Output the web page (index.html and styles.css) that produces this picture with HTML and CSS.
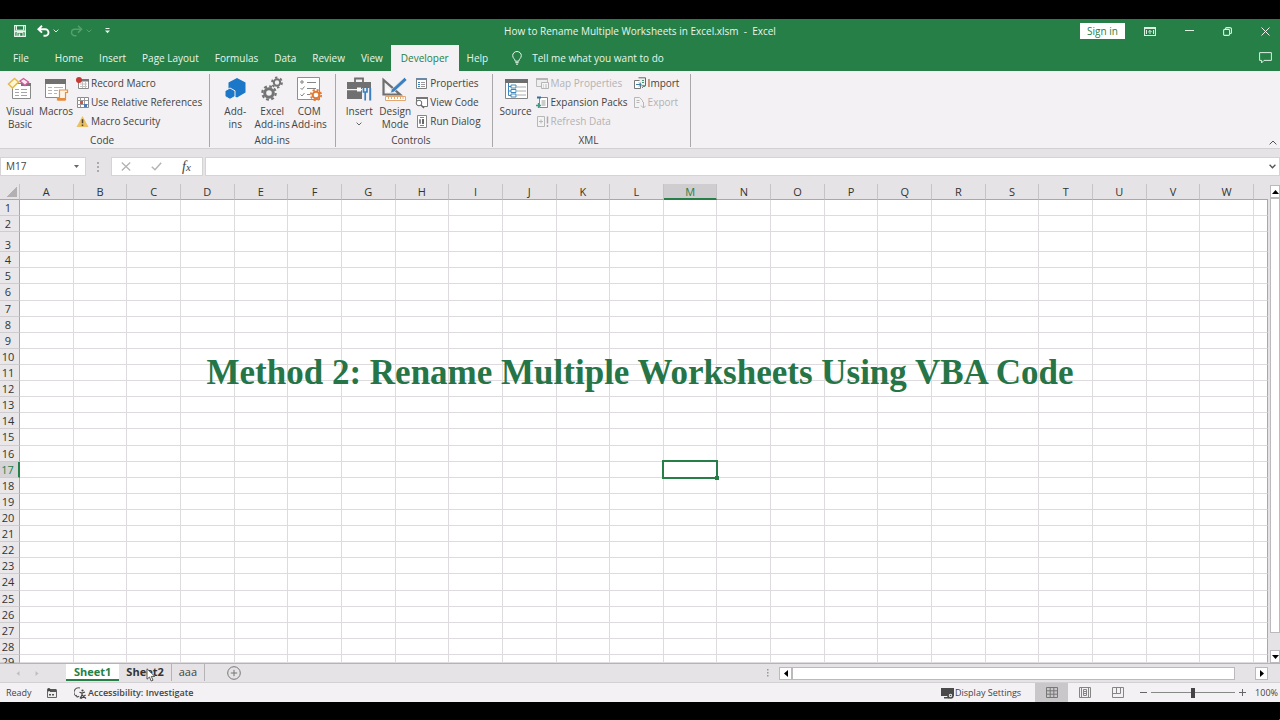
FILE: index.html
```html
<!DOCTYPE html>
<html lang="en">
<head>
  <meta charset="UTF-8" />
  <meta name="viewport" content="width=device-width, initial-scale=1" />
  <title>How to Rename Multiple Worksheets in Excel.xlsm - Excel</title>
  <link rel="stylesheet" href="styles.css">
</head>
<body>

  <!-- Title bar -->
  <header class="titlebar">
    <div class="quick-access">
      <button class="icon-btn" aria-label="Save">
        <svg width="12" height="12" viewBox="0 0 12 12"><path d="M.7.7h10.6v10.6H.7z" fill="none" stroke="#e9f5ec" stroke-width="1.3"/><path d="M2.500 1v4.200h7V1M3 11V7.600h6V11" fill="none" stroke="#e9f5ec"/><path d="M1 5.600h10v1.600H1zM4.600 8.400h1.600V11H4.600z" fill="#e9f5ec"/></svg>
      </button>
      <button class="icon-btn undo" aria-label="Undo">
        <svg width="13" height="12" viewBox="0 0 13 12"><path d="M5 .8 1.400 4.200 5 7.600M1.800 4.200h6.400a3.200 3.200 0 0 1 0 6.600H6.500" fill="none" stroke="#fff" stroke-width="1.900"/></svg>
        <svg width="6" height="4" viewBox="0 0 6 4"><path d="M.6.6 3 3 5.400.6" fill="none" stroke="#d5ebda"/></svg>
      </button>
      <button class="icon-btn redo" aria-label="Redo">
        <svg width="13" height="12" viewBox="0 0 13 12"><path d="M8 .8 11.600 4.200 8 7.600M11.200 4.200H4.800a3.200 3.200 0 0 0 0 6.600h1.700" fill="none" stroke="#56a06d" stroke-width="1.500"/></svg>
        <svg width="6" height="4" viewBox="0 0 6 4"><path d="M.6.6 3 3 5.400.6" fill="none" stroke="#56a06d"/></svg>
      </button>
      <button class="icon-btn" aria-label="Customize Quick Access Toolbar">
        <svg width="5" height="6" viewBox="0 0 5 6"><path d="M.5.5h4" stroke="#e9f5ec"/><path d="M0 2.500h5L2.500 5.200z" fill="#e9f5ec"/></svg>
      </button>
    </div>
    <div class="doc-title">How to Rename Multiple Worksheets in Excel.xlsm&nbsp; -&nbsp; Excel</div>
    <div class="window-controls">
      <button class="sign-in">Sign in</button>
      <button class="icon-btn" aria-label="Ribbon Display Options">
        <svg width="12" height="9" viewBox="0 0 12 9"><path d="M.5.5h11v8H.5zM.5 1.500h11" fill="none" stroke="#dcefe0" stroke-width="1.200"/><path d="M6 7V3.500M4.200 5.200 6 3.400l1.800 1.800M2.500 3v4M9.500 3v4" fill="none" stroke="#dcefe0"/></svg>
      </button>
      <button class="icon-btn" aria-label="Minimize">
        <svg width="9" height="9" viewBox="0 0 9 9"><path d="M0 3.500h9" stroke="#dcefe0"/></svg>
      </button>
      <button class="icon-btn" aria-label="Restore">
        <svg width="9" height="9" viewBox="0 0 9 9"><rect x=".6" y="2.400" width="6" height="6" rx="1.200" fill="none" stroke="#dcefe0" stroke-width="1.100"/><path d="M2.500 2V1.600A1 1 0 0 1 3.500.6h3.400A1.600 1.600 0 0 1 8.500 2.200v3.300a1 1 0 0 1-1 1H7" fill="none" stroke="#dcefe0" stroke-width="1.100"/></svg>
      </button>
      <button class="icon-btn" aria-label="Close">
        <svg width="9" height="9" viewBox="0 0 9 9"><path d="m.5.5 8 8m0-8-8 8" stroke="#e9f5ec"/></svg>
      </button>
    </div>
  </header>

  <!-- Ribbon tabs -->
  <nav class="tabs">
    <button class="tab tab-file">File</button>
    <button class="tab">Home</button>
    <button class="tab">Insert</button>
    <button class="tab">Page Layout</button>
    <button class="tab">Formulas</button>
    <button class="tab">Data</button>
    <button class="tab">Review</button>
    <button class="tab">View</button>
    <button class="tab active">Developer</button>
    <button class="tab">Help</button>
    <button class="tab tell-me">
      <svg width="10" height="14" viewBox="0 0 10 14"><path d="M3.200 10.200C3.200 8 .7 7.400.7 4.600A4.300 4.100 0 0 1 9.300 4.600C9.300 7.400 6.800 8 6.800 10.200zM3.300 11.700h3.400M4 13.200h2" fill="none" stroke="#e9f5ec"/></svg>
      Tell me what you want to do
    </button>
    <button class="icon-btn comments" aria-label="Comments">
      <svg width="13" height="12" viewBox="0 0 13 12"><path d="M.6.6h11.800v7.800H5L2.600 10.900V8.400h-2z" fill="none" stroke="#dcefe0"/></svg>
    </button>
  </nav>

  <!-- Ribbon -->
  <section class="ribbon">
    <div class="group group-code">
      <div class="group-body">
        <button class="big-btn">
          <svg width="26" height="26" viewBox="0 0 26 26"><path d="M5.500 7.500h18v15h-18z" fill="#fff" stroke="#8a8a8a"/><path d="M14 7h10v3H14z" fill="#777"/><path d="M8 13.500h4M14 13.500h6M8 16.500h4M14 16.500h6M8 19.500h4M14 19.500h6" stroke="#a5a5a5"/><path d="m1.500 8 6-5.500 4 3.500-6 6z" fill="#fff6d5" stroke="#e5b94b" stroke-width="1.500"/><path d="m13 5 3.500-2.500L21.500 6l-3.500 3.500z" fill="#fdeaf2" stroke="#cf5b9a" stroke-width="1.300"/></svg>
          <span>Visual<br>Basic</span>
        </button>
        <button class="big-btn">
          <svg width="26" height="26" viewBox="0 0 26 26"><path d="M2.500 3.500h20v18h-20z" fill="#fff" stroke="#8a8a8a"/><path d="M2 3h21v5H2z" fill="#707070"/><path d="M5 11.500h4M11 11.500h9M5 14.500h4M11 14.500h4M5 17.500h4M11 17.500h3" stroke="#b5b5b5"/><path d="M16.500 14h8v2.500h-2V24h-8v-2.500h2z" fill="#fff3e6" stroke="#e0904a" stroke-width="1.200"/><path d="M14 22h8v2.500h-7z" fill="#e58a3a"/></svg>
          <span>Macros</span>
        </button>
        <div class="small-col">
          <button class="small-btn">
            <svg width="13" height="13" viewBox="0 0 13 13"><path d="M2.500 2.500h10v9h-10z" fill="#fff" stroke="#8a8a8a"/><path d="M5 2h8v2.500H5z" fill="#777"/><path d="M4 7h7M4 9.500h7M6.500 5v6M9.500 5v6" stroke="#c2c2c2"/><circle cx="3" cy="3" r="3" fill="#c63a34"/></svg>
            Record Macro
          </button>
          <button class="small-btn">
            <svg width="13" height="13" viewBox="0 0 13 13"><path d="M1.500 1.500h11v10h-11z" fill="#fff" stroke="#8a8a8a"/><path d="M1 4.500h11M1 8.500h11M4.500 1v10M8.500 1v10" stroke="#9a9a9a"/><path d="M4 5h3v3H4z" fill="#c55a50"/><path d="M8 8h3v3H8z" fill="#4d79ab"/></svg>
            Use Relative References
          </button>
          <button class="small-btn">
            <svg width="13" height="13" viewBox="0 0 13 13"><path d="M6.500 1 12.500 12H.5z" fill="#e9c063"/><path d="M6.500 4.200v4M6.500 9.500v1.500" stroke="#4d4127" stroke-width="1.500"/></svg>
            Macro Security
          </button>
        </div>
      </div>
      <div class="group-name">Code</div>
    </div>

    <div class="group group-addins">
      <div class="group-body">
        <button class="big-btn">
          <svg width="26" height="26" viewBox="0 0 26 26"><path d="m15 2 8.500 4.500v10L15 21.500l-8.500-5v-10z" fill="#1b78c8"/><path d="m8 12 5 2.800v5.600L8 23.300l-5-2.900v-5.600z" fill="#1b78c8" stroke="#f3f1f3"/></svg>
          <span>Add-<br>ins</span>
        </button>
        <button class="big-btn">
          <svg width="26" height="26" viewBox="0 0 26 26" fill="none" stroke="#747474"><circle cx="18" cy="6.500" r="3.200" stroke-width="2"/><circle cx="18" cy="6.500" r="5" stroke-width="1.800" stroke-dasharray="2.400 2.836"/><circle cx="10" cy="17" r="4.300" stroke-width="3"/><circle cx="10" cy="17" r="6.700" stroke-width="2.200" stroke-dasharray="2.900 2.362"/></svg>
          <span>Excel<br>Add-ins</span>
        </button>
        <button class="big-btn">
          <svg width="26" height="26" viewBox="0 0 26 26" fill="none"><path d="M1.500 1.500h22v22h-22z" fill="#fff" stroke="#8f8f8f"/><circle cx="6" cy="6" r="1.200" stroke="#777"/><path d="m4.500 12 1.500 1.500 2.500-3M4.500 18.500 6 20l2.500-3M11 6.500h9M11 12.500h9M11 18.500h3" stroke="#858585"/><circle cx="20" cy="19" r="3.300" fill="#fff" stroke="#e07b35" stroke-width="2"/><circle cx="20" cy="19" r="5.200" stroke="#e07b35" stroke-width="1.800" stroke-dasharray="2.200 1.884"/></svg>
          <span>COM<br>Add-ins</span>
        </button>
      </div>
      <div class="group-name">Add-ins</div>
    </div>

    <div class="group group-controls">
      <div class="group-body">
        <button class="big-btn">
          <svg width="26" height="26" viewBox="0 0 26 26"><path d="M9 6V2.500h8V6" fill="none" stroke="#6f6f6f" stroke-width="1.800"/><path d="M1 6h24v7H1zM1 14.200h24V23H1z" fill="#707070"/><path d="M11 11.500h4v4h-4z" fill="#fff"/><path d="M16 12h10v13H16z" fill="#f3f1f3"/><path d="M17.500 12v4h3.500v-4M19.200 16v8.500" fill="none" stroke="#3c80bf" stroke-width="1.700"/><path d="M24.200 12v6M24.200 18v6.500" stroke="#3c80bf" stroke-width="2"/></svg>
          <span>Insert</span>
          <svg class="caret" width="6" height="4" viewBox="0 0 6 4"><path d="M.6.6 3 3 5.400.6" fill="none" stroke="#666"/></svg>
        </button>
        <button class="big-btn">
          <svg width="26" height="26" viewBox="0 0 26 26"><path d="M1.500 4v14.500H18z" fill="none" stroke="#6f6f6f" stroke-width="2.200"/><path d="M4.500 11v5h5z" fill="#fff"/><path d="m9.500 13.500 13-12 2.500 2.500-13 12-3.500 1z" fill="#3c80bf" stroke="#f3f1f3" stroke-width=".6"/><path d="M3.500 20.500h20v4h-20z" fill="#fff" stroke="#e2a873"/><path d="M6.500 21v2M9.500 21v2M12.500 21v2M15.500 21v2M18.500 21v2M21 21v2" stroke="#e2a873"/></svg>
          <span>Design<br>Mode</span>
        </button>
        <div class="small-col">
          <button class="small-btn">
            <svg width="13" height="13" viewBox="0 0 13 13"><path d="M1.500 1.500h10v10h-10z" fill="#fff" stroke="#808080"/><path d="M1 1h11v2H1z" fill="#6d88a5"/><path d="M3 5.500h2M3 7.500h2M3 9.500h2" stroke="#3c80bf"/><path d="M6 5.500h4M6 7.500h4M6 9.500h4" stroke="#999"/></svg>
            Properties
          </button>
          <button class="small-btn">
            <svg width="13" height="13" viewBox="0 0 13 13"><path d="M1.500 5V1.500h11v9H7" fill="#fff" stroke="#777"/><path d="M1 1h12v2H1z" fill="#777"/><circle cx="4" cy="7" r="2.800" fill="#fff" stroke="#666"/><path d="m6 9 3 3" stroke="#666" stroke-width="1.500"/></svg>
            View Code
          </button>
          <button class="small-btn">
            <svg width="13" height="13" viewBox="0 0 13 13"><path d="M2.500.5h9v12h-9z" fill="#fff" stroke="#858585"/><path d="M5 2.500h4M5 10.500h4M4.500 4.500h1v4h-1z" stroke="#888" fill="none"/><path d="M7 4h2v5H7z" fill="#666"/></svg>
            Run Dialog
          </button>
        </div>
      </div>
      <div class="group-name">Controls</div>
    </div>

    <div class="group group-xml">
      <div class="group-body">
        <button class="big-btn">
          <svg width="26" height="26" viewBox="0 0 26 26"><path d="M2.500 3.500h22v19h-22z" fill="#fff" stroke="#858585"/><path d="M2 3h23v4H2z" fill="#6e6e6e"/><path d="M14 11h9M14 15h9M14 19h9" stroke="#aaa"/><path d="M5.500 7v12.500H8M5.500 10.500H8M5.500 15H8" fill="none" stroke="#3f87b8"/><path d="M8 9h5v3H8zM8 13.500h5v3H8zM8 18h5v3H8z" fill="#fff" stroke="#3f87b8"/></svg>
          <span>Source</span>
        </button>
        <div class="small-col">
          <button class="small-btn" disabled>
            <svg width="13" height="13" viewBox="0 0 13 13"><path d="M.5 1.500h11v8h-11z" fill="#eee" stroke="#bbb"/><path d="M0 1h12v2H0z" fill="#b5b5b5"/><path d="M5.500 5.500h7v6h-7z" fill="#f5f5f5" stroke="#b5b5b5"/><path d="M7 8h1M9 8h2M7 10h1M9 10h2" stroke="#bbb"/></svg>
            Map Properties
          </button>
          <button class="small-btn">
            <svg width="13" height="13" viewBox="0 0 13 13"><path d="M3.500 1.500h8v10h-8z" fill="#fff" stroke="#858585"/><path d="M5.500 5h4M5.500 7h4M5.500 9h4" stroke="#999"/><path d="M1 1.500h4" stroke="#356f9f" stroke-width="2"/><path d="M2.500 7v5M0 9.500h5" stroke="#3f9a86" stroke-width="1.300"/></svg>
            Expansion Packs
          </button>
          <button class="small-btn" disabled>
            <svg width="13" height="13" viewBox="0 0 13 13"><path d="M1.500 1.500h7v10h-7z" fill="#f3f3f3" stroke="#b8b8b8"/><path d="M3 6.500h4M5 4.500v4" stroke="#b8b8b8"/><path d="M11.500 1.500v7M11.500 10v2" stroke="#a9a9a9" stroke-width="1.500"/></svg>
            Refresh Data
          </button>
        </div>
        <div class="small-col">
          <button class="small-btn">
            <svg width="13" height="13" viewBox="0 0 13 13"><path d="M1.500 3.500h6v8h-6z" fill="#fff" stroke="#777"/><path d="M5.500.8h7v8h-4" fill="#eaf2ef" stroke="#666"/><path d="M3 7.500h5M6 5.500l2 2-2 2" fill="none" stroke="#3f7f9f"/><path d="M9 3.500h2M9 5.500h2M9 11l2-2 1 1" fill="none" stroke="#4e8f78"/></svg>
            Import
          </button>
          <button class="small-btn" disabled>
            <svg width="13" height="13" viewBox="0 0 13 13"><path d="M6 11.500H1.500v-10h5l3 3V6" fill="#f3f3f3" stroke="#b8b8b8"/><path d="M3.500 4.500h3M3.500 6.500h3M10.500 6v6M8 9.500l2.500 2.500L13 9.500" fill="none" stroke="#b8b8b8"/></svg>
            Export
          </button>
        </div>
      </div>
      <div class="group-name">XML</div>
    </div>
    <button class="icon-btn collapse" aria-label="Collapse the Ribbon">
      <svg width="8" height="5" viewBox="0 0 8 5"><path d="m.6 4.400 3.400-3.400 3.400 3.400" fill="none" stroke="#555"/></svg>
    </button>
  </section>

  <!-- Formula bar -->
  <section class="formula-bar">
    <div class="name-box">
      <input type="text" value="M17" aria-label="Name Box">
      <svg width="5" height="3" viewBox="0 0 5 3"><path d="M0 0h5L2.500 3z" fill="#666"/></svg>
    </div>
    <svg class="grip" width="2" height="10" viewBox="0 0 2 10"><path d="M0 0h2v2H0zM0 4h2v2H0zM0 8h2v2H0z" fill="#aaa"/></svg>
    <div class="formula-buttons">
      <button class="icon-btn" aria-label="Cancel">
        <svg width="10" height="9" viewBox="0 0 10 9"><path d="m.8.5 8.400 8m0-8-8.400 8" stroke="#b0b0b0" stroke-width="1.200"/></svg>
      </button>
      <button class="icon-btn" aria-label="Enter">
        <svg width="11" height="9" viewBox="0 0 11 9"><path d="m.8 4.800 3.200 3L10.200.8" fill="none" stroke="#b5b5b5" stroke-width="1.500"/></svg>
      </button>
      <button class="icon-btn fx" aria-label="Insert Function"><i>f<small>x</small></i></button>
    </div>
    <div class="formula-box">
      <input type="text" aria-label="Formula Bar">
      <svg width="7" height="5" viewBox="0 0 7 5"><path d="m.6.8 2.900 3 2.900-3" fill="none" stroke="#555" stroke-width="1.300"/></svg>
    </div>
  </section>

  <!-- Worksheet -->
  <main class="sheet">
    <table class="cells" id="cells">
      <thead></thead>
      <tbody></tbody>
    </table>
    <div class="vscroll">
      <button class="scroll-btn" aria-label="Scroll up"><svg width="7" height="4" viewBox="0 0 7 4"><path d="M0 4h7L3.500 0z"/></svg></button>
      <div class="vthumb"></div>
      <button class="scroll-btn" aria-label="Scroll down"><svg width="7" height="4" viewBox="0 0 7 4"><path d="M0 0h7L3.500 4z"/></svg></button>
    </div>
    <h1 class="caption">Method 2: Rename Multiple Worksheets Using VBA Code</h1>
  </main>

  <!-- Sheet tabs -->
  <section class="sheet-bar">
    <div class="sheet-nav">
      <svg width="4" height="5" viewBox="0 0 4 5"><path d="M3.500 0v5L.5 2.500z" fill="#c0bec0"/></svg>
      <svg width="4" height="5" viewBox="0 0 4 5"><path d="M.5 0v5l3-2.500z" fill="#c0bec0"/></svg>
    </div>
    <button class="sheet-tab current">Sheet1</button>
    <button class="sheet-tab hovered">Sheet2
      <svg class="pointer" width="10" height="14" viewBox="0 0 10 14"><path d="M1 .8v10.400l2.500-2.200 1.700 4 1.800-.8-1.700-3.800h3.500z" fill="#fff" stroke="#444" stroke-width=".9"/></svg>
    </button>
    <button class="sheet-tab">aaa</button>
    <button class="icon-btn new-sheet" aria-label="New sheet">
      <svg width="14" height="14" viewBox="0 0 14 14"><circle cx="7" cy="7" r="6.300" fill="none" stroke="#777"/><path d="M7 3.800v6.400M3.800 7h6.400" stroke="#777"/></svg>
    </button>
    <div class="hscroll">
      <svg class="grip" width="2" height="8" viewBox="0 0 2 8"><path d="M0 0h1.500v1.500H0zM0 3h1.500v1.500H0zM0 6h1.500v1.500H0z" fill="#999"/></svg>
      <button class="scroll-btn" aria-label="Scroll left"><svg width="4" height="7" viewBox="0 0 4 7"><path d="M4 0v7L0 3.500z"/></svg></button>
      <div class="hthumb"></div>
      <button class="scroll-btn" aria-label="Scroll right"><svg width="4" height="7" viewBox="0 0 4 7"><path d="M0 0v7l4-3.500z"/></svg></button>
    </div>
  </section>

  <!-- Status bar -->
  <footer class="status-bar">
    <span class="ready">Ready</span>
    <button class="icon-btn macro-rec" aria-label="Record macro">
      <svg width="10" height="10" viewBox="0 0 10 10"><path d="M.5 2.500h9v7h-9z" fill="#eee" stroke="#666"/><path d="M3 1h6.500v3H3zM2 6h2v1.500H2zM5 6h2v1.500H5z" fill="#555"/><circle cx="1.800" cy="1.800" r="1.700" fill="#444"/></svg>
    </button>
    <button class="status-btn access">
      <svg width="13" height="12" viewBox="0 0 13 12"><path d="M6 1A4.500 4.500 0 0 0 3 9.500M2 8l1.200 2 2-.8" fill="none" stroke="#555" stroke-width="1.100"/><circle cx="8.500" cy="3.500" r="1.100" fill="#444"/><path d="M5.500 5.200 8 6l3-1M8 6v2l-2 3.500M8 8l4 3.500M11.500 8 7 11.500" fill="none" stroke="#444" stroke-width="1.200"/></svg>
      Accessibility: Investigate
    </button>
    <button class="status-btn display">
      <svg width="13" height="12" viewBox="0 0 13 12"><path d="M0 1h13v8H0zM3 10h5v1.500H3z" fill="#4a4a4a"/><circle cx="9.500" cy="8.500" r="2.500" fill="#f3f1f3" stroke="#4a4a4a" stroke-width="1.600"/><circle cx="9.500" cy="8.500" r=".8" fill="#4a4a4a"/></svg>
      Display Settings
    </button>
    <button class="view-btn selected" aria-label="Normal">
      <svg width="12" height="11" viewBox="0 0 12 11"><path d="M.5.5h11v10H.5zM.5 3.800h11M.5 7.200h11M4.200.5v10M7.800.5v10" fill="none" stroke="#777"/></svg>
    </button>
    <button class="view-btn" aria-label="Page Layout">
      <svg width="12" height="11" viewBox="0 0 12 11"><path d="M.5.5h11v10H.5zM2.500.5v10M9.500.5v10M4.500 2.500h3v6h-3zM4.500 4.500h3M4.500 6.500h3" fill="none" stroke="#858585"/></svg>
    </button>
    <button class="view-btn" aria-label="Page Break Preview">
      <svg width="12" height="11" viewBox="0 0 12 11"><path d="M.5.500h11v10H.5zM4.500.5v6M.5 6.500h8V.5" fill="none" stroke="#858585"/></svg>
    </button>
    <div class="zoom">
      <button class="icon-btn" aria-label="Zoom Out"><svg width="7" height="7" viewBox="0 0 7 7"><path d="M0 3.500h7" stroke="#666"/></svg></button>
      <input type="range" min="0" max="100" value="50" aria-label="Zoom">
      <button class="icon-btn" aria-label="Zoom In"><svg width="7" height="7" viewBox="0 0 7 7"><path d="M0 3.500h7M3.500 0v7" stroke="#666"/></svg></button>
      <span class="percent">100%</span>
    </div>
  </footer>

  <script>
    const columns = 'ABCDEFGHIJKLMNOPQRSTUVW'.split('');
    const rowCount = 29;
    const active = { column: 'M', row: 17 };

    const table = document.getElementById('cells');

    const head = document.createElement('tr');
    head.innerHTML = '<td class="corner"></td>' +
      columns.map(c => `<th class="${c === active.column ? 'on' : ''}">${c}</th>`).join('') +
      '<td class="rest"></td>';
    table.tHead.appendChild(head);

    for (let r = 1; r <= rowCount; r++) {
      const tr = document.createElement('tr');
      if (r === 3) tr.className = 'tall';
      if (r === rowCount) tr.className = 'cut';
      tr.innerHTML = `<th class="${r === active.row ? 'on' : ''}">${r}</th>` +
        columns.map(c => `<td class="${r === active.row && c === active.column ? 'selected' : ''}"></td>`).join('') +
        '<td></td>';
      table.tBodies[0].appendChild(tr);
    }
  </script>
</body>
</html>
```

FILE: styles.css
```css
* {
  box-sizing: border-box;
}
body {
  margin: 0;
  padding: 19px 0 18px;
  height: 100vh;
  display: flex;
  flex-direction: column;
  background: #000;
  color: #444;
  font-family: "Open Sans", "Noto Sans", sans-serif;
  font-size: 10px;
  line-height: 13px;
}
button,
input {
  font: inherit;
  color: inherit;
  margin: 0;
  padding: 0;
  border: none;
  background: none;
}
svg {
  display: block;
  flex: none;
}
.icon-btn {
  display: flex;
  align-items: center;
  justify-content: center;
}

/* title bar */
.titlebar {
  display: grid;
  grid-template-columns: 1fr auto 1fr;
  align-items: center;
  height: 24px;
  flex: none;
  background: #257f47;
  color: #e9f5ec;
}
.quick-access {
  display: flex;
  align-items: center;
  gap: 11px;
  padding-left: 14px;
}
.undo,
.redo {
  gap: 3px;
}
.redo {
  margin-right: 2px;
}
.window-controls {
  display: flex;
  align-items: center;
  justify-content: flex-end;
  padding-right: 10px;
}
.window-controls .icon-btn {
  margin-left: 29px;
}
.window-controls .sign-in + .icon-btn {
  margin-left: 19px;
}
.sign-in {
  width: 45px;
  height: 16px;
  background: #fff;
  color: #257f47;
}

/* ribbon tabs */
.tabs {
  display: flex;
  align-items: stretch;
  height: 28px;
  padding: 2px 8px 0 5px;
  flex: none;
  background: #257f47;
  color: #e9f5ec;
}
.tab {
  padding: 0 8px;
}
.tab-file {
  margin-right: 10px;
}
.tab.active {
  padding: 0 10px;
  background: #f3f1f3;
  color: #257f47;
}
.tell-me {
  display: flex;
  align-items: center;
  gap: 10px;
  margin-left: 8px;
}
.comments {
  margin-left: auto;
}

/* ribbon */
.ribbon {
  display: flex;
  align-items: stretch;
  height: 77px;
  flex: none;
  background: #f3f1f3;
}
.group {
  display: flex;
  flex-direction: column;
  justify-content: space-between;
  margin: 3px 0 1px;
  padding: 0 8px 0 5px;
  border-right: 1px solid #a9a7a9;
}
.group-code {
  padding: 0 7px 0 2px;
}
.group-addins {
  padding-left: 7px;
}
.group-controls,
.group-xml {
  padding-right: 11px;
}
.group-body {
  display: flex;
}
.group-addins .group-body {
  gap: 1px;
}
.group-name {
  text-align: center;
}
.big-btn {
  display: flex;
  flex-direction: column;
  align-items: center;
  width: 36px;
  padding-top: 2px;
}
.big-btn span {
  margin-top: 3px;
  white-space: nowrap;
}
.caret {
  margin-top: 4px;
}
.small-col {
  display: flex;
  flex-direction: column;
  padding-left: 2px;
}
.small-btn {
  display: flex;
  align-items: center;
  gap: 2px;
  height: 19px;
  white-space: nowrap;
}
.small-col + .small-col {
  padding-left: 5px;
}
.small-btn:disabled {
  color: #b3b1b3;
}
.collapse {
  align-self: flex-end;
  margin: 0 3px 3px auto;
}

/* formula bar */
.formula-bar {
  display: flex;
  align-items: center;
  height: 36px;
  flex: none;
  border-top: 1px solid #d2d0d2;
  background: #e5e3e5;
}
.name-box {
  display: flex;
  align-items: center;
  width: 86px;
  height: 19px;
  padding: 0 6px 0 5px;
  border: 1px solid #d5d3d5;
  background: #fff;
}
.name-box input {
  flex: 1;
  min-width: 0;
}
.formula-bar .grip {
  margin: 0 12px 0 11px;
}
.formula-buttons {
  display: flex;
  align-items: center;
  gap: 20px;
  width: 92px;
  height: 19px;
  padding-left: 9px;
  border: 1px solid #d5d3d5;
  background: #fff;
}
.fx {
  font-family: "Liberation Serif", serif;
  font-size: 14px;
}
.fx small {
  font-size: 11px;
}
.formula-box {
  display: flex;
  align-items: center;
  flex: 1;
  height: 19px;
  margin-left: 2px;
  padding: 0 3px;
  border: 1px solid #d5d3d5;
  background: #fff;
}
.formula-box input {
  flex: 1;
}

/* worksheet */
.sheet {
  position: relative;
  display: flex;
  flex: 1;
  min-height: 0;
  background: #e5e3e5;
}
.cells {
  display: flex;
  flex-direction: column;
  flex: 1;
  font-size: 11px;
}
.cells thead,
.cells tbody {
  display: contents;
}
.cells tr {
  display: grid;
  grid-template-columns: 20px repeat(23, 1fr) 14px;
  flex: 1;
  min-height: 0;
}
.cells thead tr {
  flex: 0 0 16px;
}
.cells .tall {
  flex: 0 0 20px;
}
.cells .cut {
  flex: 0 0 8px;
  overflow: hidden;
}
.cells th,
.cells td {
  padding: 0;
  border-right: 1px solid #dddbdd;
  border-bottom: 1px solid #dddbdd;
}
.cells td {
  position: relative;
  background: #fff;
}
.cells th {
  display: flex;
  align-items: center;
  justify-content: center;
  min-height: 0;
  background: #e9e7e9;
  color: #333;
  font-weight: normal;
}
.cells thead th,
.cells thead td {
  background: #e5e3e5;
  border-right-color: #c5c3c5;
  border-bottom-color: #a9a7a9;
}
.cells tbody th {
  padding-right: 3px;
  border-right-color: #a9a7a9;
  border-bottom-color: #cfcdcf;
}
.cells tbody td:last-child {
  border-right-color: #a9a7a9;
}
.cells .tall th {
  align-items: flex-end;
}
.cells .cut th {
  align-items: flex-start;
}
.cells thead .rest {
  border-right: none;
}
.cells thead .corner {
  background: linear-gradient(135deg, transparent 50%, #b2b0b2 50%) 7px 3px / 10px 10px no-repeat #e5e3e5;
}
.cells thead th.on {
  background: #cfcdcf;
  border-bottom: 2px solid #257f47;
  color: #257f47;
}
.cells tbody th.on {
  background: #d6d4d6;
  border-right: 2px solid #257f47;
  color: #257f47;
}
.cells .selected {
  z-index: 1;
}
.selected::before {
  content: "";
  position: absolute;
  inset: -2px;
  border: 2px solid #257f47;
}
.selected::after {
  content: "";
  position: absolute;
  right: -3px;
  bottom: -3px;
  width: 4px;
  height: 4px;
  background: #257f47;
}
.caption {
  position: absolute;
  inset: 169px 0 auto;
  margin: 0;
  text-align: center;
  font: bold 35px/40px "Liberation Serif", serif;
  color: #257547;
}

/* scroll bars */
.scroll-btn {
  display: flex;
  align-items: center;
  justify-content: center;
  width: 13px;
  height: 13px;
  flex: none;
  border: 1px solid #bbb9bb;
  background: #fff;
}
.vscroll {
  display: flex;
  flex-direction: column;
  width: 12px;
  padding: 1px 0 0 2px;
}
.vscroll .scroll-btn {
  width: 100%;
}
.vthumb {
  flex: 1;
  margin-bottom: 17px;
  border: 1px solid #bbb9bb;
  background: #fff;
}

/* sheet tabs */
.sheet-bar {
  display: flex;
  align-items: center;
  height: 20px;
  flex: none;
  border-top: 1px solid #b5b3b5;
  border-bottom: 1px solid #d2d0d2;
  background: #e5e3e5;
}
.sheet-nav {
  display: flex;
  gap: 15px;
  width: 66px;
  padding-left: 16px;
}
.sheet-tab {
  position: relative;
  align-self: flex-start;
  height: 17px;
  padding: 0 7px 2px;
  font-size: 11px;
}
.sheet-tab + .sheet-tab {
  border-right: 1px solid #b5b3b5;
}
.sheet-tab.current {
  padding: 0 8px;
  background: #fff;
  border-bottom: 2px solid #257f47;
  color: #257f47;
  font-weight: bold;
}
.sheet-tab.hovered {
  color: #333;
  font-weight: bold;
}
.pointer {
  position: absolute;
  left: 27px;
  top: 4px;
}
.new-sheet {
  margin-left: 22px;
}
.hscroll {
  display: flex;
  align-items: center;
  width: 501px;
  margin: 0 12px 0 auto;
}
.hscroll .grip {
  margin-right: 10px;
}
.hthumb {
  flex: 1;
  height: 13px;
  margin-right: 20px;
  border: 1px solid #bbb9bb;
  background: #fff;
}

/* status bar */
.status-bar {
  display: flex;
  align-items: center;
  height: 19px;
  flex: none;
  background: #f3f1f3;
  font-size: 9px;
}
.ready {
  width: 47px;
  padding-left: 6px;
}
.status-btn {
  display: flex;
  align-items: center;
  gap: 1px;
}
.access {
  margin-left: 17px;
  font-weight: 600;
}
.display {
  margin: 0 14px 0 auto;
}
.view-btn {
  display: flex;
  align-items: center;
  justify-content: center;
  width: 33px;
  height: 100%;
}
.view-btn.selected {
  background: #c9c7c9;
}
.zoom {
  display: flex;
  align-items: center;
  gap: 4px;
  padding: 0 2px 0 6px;
}
.zoom input {
  appearance: none;
  width: 84px;
  height: 10px;
  background: linear-gradient(#888, #888) center / 100% 1px no-repeat;
}
.zoom input::-webkit-slider-thumb {
  appearance: none;
  width: 4px;
  height: 10px;
  background: #444;
}
.percent {
  margin-left: 5px;
}
```
